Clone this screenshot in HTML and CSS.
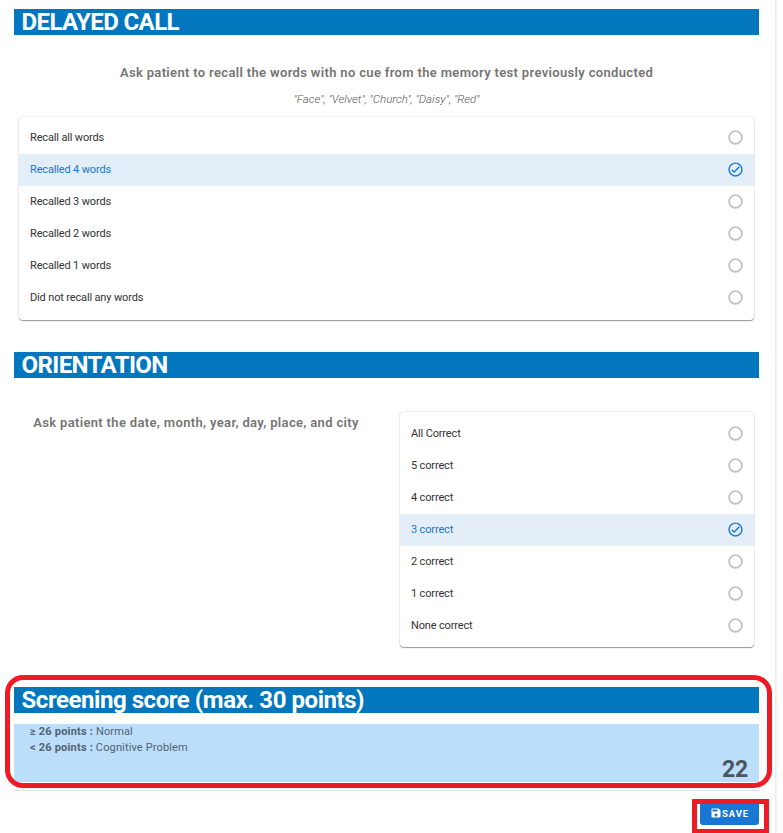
FILE: index.html
```html
<!DOCTYPE html>
<html lang="en">
<head>
<meta charset="utf-8">
<title>Cognitive screening</title>
<link rel="stylesheet" href="styles.css">
</head>
<body>
<svg class="defs" width="0" height="0">
  <symbol id="off" viewBox="0 0 24 24"><path d="M12 20a8 8 0 1 1 0-16 8 8 0 0 1 0 16m0-18a10 10 0 1 0 0 20 10 10 0 0 0 0-20z"/></symbol>
  <symbol id="on" viewBox="0 0 24 24"><path d="M12 2C6.500 2 2 6.500 2 12s4.500 10 10 10 10-4.500 10-10S17.500 2 12 2m0 18c-4.410 0-8-3.590-8-8s3.590-8 8-8 8 3.590 8 8-3.590 8-8 8m4.590-12.420L10 14.170l-2.590-2.580L6 13l4 4 8-8z"/></symbol>
</svg>
<main class="sheet">
  <h2 class="bar">DELAYED CALL</h2>
  <section class="recall">
    <p class="question">Ask patient to recall the words with no cue from the memory test previously conducted</p>
    <p class="hint">"Face", "Velvet", "Church", "Daisy", "Red"</p>
    <ul class="card">
      <li><span>Recall all words</span><svg><use href="#off"/></svg></li>
      <li class="selected"><span>Recalled 4 words</span><svg><use href="#on"/></svg></li>
      <li><span>Recalled 3 words</span><svg><use href="#off"/></svg></li>
      <li><span>Recalled 2 words</span><svg><use href="#off"/></svg></li>
      <li><span>Recalled 1 words</span><svg><use href="#off"/></svg></li>
      <li><span>Did not recall any words</span><svg><use href="#off"/></svg></li>
    </ul>
  </section>
  <h2 class="bar">ORIENTATION</h2>
  <section class="orientation">
    <p class="question">Ask patient the date, month, year, day, place, and city</p>
    <ul class="card">
      <li><span>All Correct</span><svg><use href="#off"/></svg></li>
      <li><span>5 correct</span><svg><use href="#off"/></svg></li>
      <li><span>4 correct</span><svg><use href="#off"/></svg></li>
      <li class="selected"><span>3 correct</span><svg><use href="#on"/></svg></li>
      <li><span>2 correct</span><svg><use href="#off"/></svg></li>
      <li><span>1 correct</span><svg><use href="#off"/></svg></li>
      <li><span>None correct</span><svg><use href="#off"/></svg></li>
    </ul>
  </section>
  <section class="score">
    <h2 class="bar score-title">Screening score (max. 30 points)</h2>
    <div class="result">
      <p><b>≥ 26 points :</b> Normal</p>
      <p><b>&lt; 26 points :</b> Cognitive Problem</p>
      <strong class="total">22</strong>
    </div>
    <div class="marker"></div>
  </section>
  <footer class="actions">
    <button class="save"><svg viewBox="0 0 24 24"><path d="M15 9H5V5h10m-3 14a3 3 0 0 1-3-3 3 3 0 0 1 3-3 3 3 0 0 1 3 3 3 3 0 0 1-3 3m5-16H5a2 2 0 0 0-2 2v14a2 2 0 0 0 2 2h14a2 2 0 0 0 2-2V7z"/></svg><span>SAVE</span></button>
    <div class="save-marker"></div>
  </footer>
</main>
</body>
</html>
```
FILE: styles.css
```css
* { box-sizing: border-box; }
body { margin: 0; height: 833px; overflow: hidden; background: #fff; font-family: Roboto, sans-serif; }
h2, p, ul { margin: 0; padding: 0; }
.defs { display: block; position: absolute; }
.sheet { width: 776px; height: 833px; padding: 9px 16px 0 14px; border-right: 1px solid #ececec; box-shadow: 1px 0 2px rgba(0,0,0,.06); }
.bar { height: 26px; padding-left: 7.5px; background: #0277bd; color: #fff; font-size: 24px; font-weight: 700; line-height: 26px; letter-spacing: -.6px; white-space: nowrap; }
.score-title { letter-spacing: -.45px; }
.recall { height: 317px; padding: 28px 5px 0; text-align: center; }
.question { color: #757575; font-size: 13px; font-weight: 600; line-height: 20px; letter-spacing: .34px; white-space: nowrap; }
.hint { margin-top: 8px; height: 26px; color: #555; font-size: 11.5px; font-weight: 300; font-style: italic; line-height: 16px; letter-spacing: .02px; }
.card { list-style: none; padding: 5px 0 6px; border-radius: 4px; text-align: left; background: #fff; box-shadow: 0 1px 1px rgba(0,0,0,.38), 0 0 2px rgba(0,0,0,.2); }
.card li { display: flex; justify-content: space-between; align-items: center; height: 32px; padding: 0 10px 0 11px; color: #333; font-size: 11px; line-height: 16px; letter-spacing: -.15px; }
.card svg { width: 17px; height: 17px; margin-bottom: 1px; fill: #bdbdbd; stroke: #bdbdbd; stroke-width: .4px; }
.card .selected { background: #e4eef9; color: #1976d2; }
.card .selected svg { fill: #1976d2; stroke: none; }
.orientation { display: grid; grid-template-columns: 366px 354px; column-gap: 20px; height: 309px; padding: 34px 5px 0 0; align-items: start; }
.orientation .question { margin-top: 1px; padding-right: 2px; text-align: center; }
.orientation .card { padding: 6px 0 5px; }
.score { position: relative; }
.result { position: relative; height: 58px; margin-top: 11px; padding-left: 16px; background: #bbdefb; color: #546270; font-size: 11px; line-height: 16px; letter-spacing: .14px; }
.result b { font-weight: 700; letter-spacing: .2px; }
.total { position: absolute; right: 11px; bottom: -2px; color: #475661; font-size: 23px; font-weight: 700; line-height: 28px; letter-spacing: -.2px; }
.marker { position: absolute; inset: -12px -13px -6px -9px; border: 5px solid #ed1c24; border-radius: 18px; }
.actions { position: relative; display: flex; justify-content: flex-end; margin-top: 8px; padding-top: 10px; border-top: 1px solid #e0e0e0; }
.save { display: flex; align-items: center; justify-content: center; width: 59px; height: 24px; padding: 0; border: 0; border-radius: 3px; background: #1976d2; color: #fff; font: 700 9.5px Roboto, sans-serif; letter-spacing: .9px; }
.save svg { width: 12px; height: 12px; fill: #fff; }
.save-marker { position: absolute; top: 8px; right: -10px; width: 77px; height: 35px; border: 5px solid #ed1c24; }
```
